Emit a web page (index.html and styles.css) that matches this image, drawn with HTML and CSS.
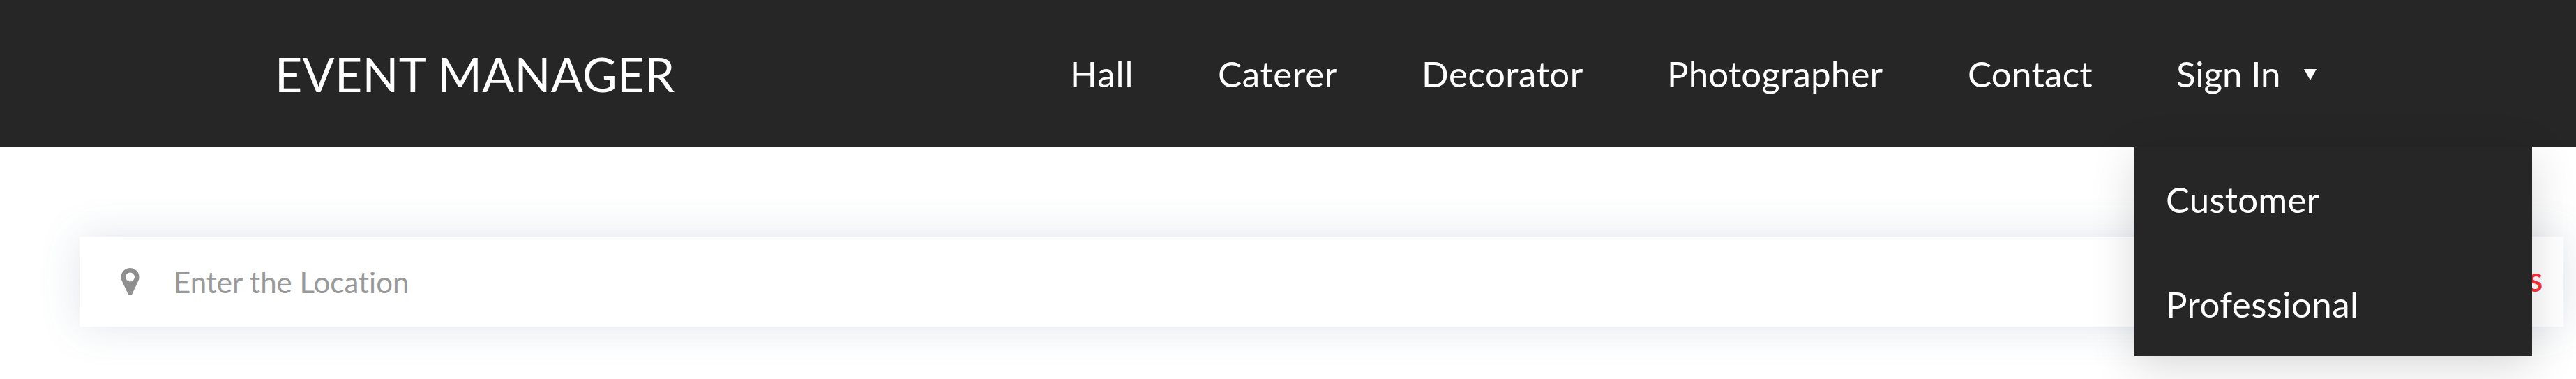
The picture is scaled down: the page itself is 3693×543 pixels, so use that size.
FILE: index.html
```html
<!DOCTYPE html>
<html lang="en">
<head>
<meta charset="utf-8">
<title>Event Manager</title>
<link rel="stylesheet" href="styles.css">
</head>
<body>
<header class="header">
  <a class="logo">EVENT MANAGER</a>
  <nav class="nav">
    <a class="nav-link hall">Hall</a>
    <a class="nav-link caterer">Caterer</a>
    <a class="nav-link decorator">Decorator</a>
    <a class="nav-link photographer">Photographer</a>
    <a class="nav-link contact">Contact</a>
    <div class="dropdown">
      <a class="nav-link sign-in">Sign In</a>
      <span class="caret"></span>
      <div class="menu">
        <a class="menu-item customer">Customer</a>
        <a class="menu-item professional">Professional</a>
      </div>
    </div>
  </nav>
</header>
<main class="main">
  <form class="search">
    <svg class="pin" viewBox="0 128 1024 1536"><path d="M768 640q0-106-75-181t-181-75-181 75-75 181 75 181 181 75 181-75 75-181zm256 0q0 109-33 179l-364 774q-16 33-47.500 52t-67.500 19-67.500-19-46.500-52l-365-774q-33-70-33-179 0-212 150-362t362-150 362 150 150 362z"/></svg>
    <span class="placeholder">Enter the Location</span>
    <span class="action">S</span>
  </form>
</main>
</body>
</html>
```
FILE: styles.css
```css
* { box-sizing: border-box; }
body {
  margin: 0;
  background: #fff;
  font-family: Lato, "Open Sans", sans-serif;
  font-variant-ligatures: none;
  overflow: hidden;
}
.header {
  display: flex;
  align-items: center;
  height: 210px;
  padding-left: 394px;
  background: #262626;
  color: #fff;
}
.logo {
  width: 1140px;
  font-size: 68px;
  letter-spacing: 0.3px;
  white-space: nowrap;
}
.nav {
  display: flex;
  align-items: center;
  height: 210px;
}
.nav-link { font-size: 51px; white-space: nowrap; }
.hall { width: 212px; letter-spacing: 1px; }
.caterer { width: 292px; letter-spacing: 0.7px; }
.decorator { width: 352px; letter-spacing: 0.55px; }
.photographer { width: 431px; letter-spacing: 0.2px; }
.contact { width: 299px; letter-spacing: 0.3px; }
.dropdown {
  position: relative;
  display: flex;
  align-items: center;
  height: 210px;
  width: 210px;
}
.sign-in { width: 183px; letter-spacing: -0.1px; }
.caret {
  border-left: 9.5px solid transparent;
  border-right: 9.5px solid transparent;
  border-top: 16px solid #fff;
  margin-top: 4px;
}
.menu {
  position: absolute;
  top: 210px;
  left: -60px;
  z-index: 2;
  width: 570px;
  background: #262626;
  box-shadow: 0 15px 60px rgba(0, 0, 0, 0.15);
}
.menu-item {
  display: flex;
  align-items: center;
  height: 150px;
  padding-left: 45px;
  font-size: 51px;
  letter-spacing: 0.2px;
}
.professional { letter-spacing: 0.45px; }
.main { padding: 129px 18px 75px 114px; }
.search {
  display: flex;
  align-items: center;
  height: 129px;
  padding: 0 30px 0 59px;
  background: #fff;
  box-shadow: 0 0 60px rgba(65, 99, 134, 0.16);
}
.pin { width: 27px; height: 39px; fill: #8f8f8f; }
.placeholder {
  flex: 1;
  margin-left: 49px;
  font-size: 42px;
  color: #999;
}
.action {
  font-size: 36px;
  font-weight: 700;
  color: #ff3038;
}
```
